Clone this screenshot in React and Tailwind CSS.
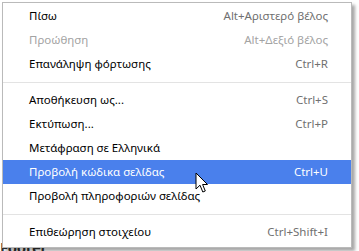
import React from 'react'

const items = [
  { label: "Πίσω", shortcut: "Alt+Αριστερό βέλος" },
  { label: "Προώθηση", shortcut: "Alt+Δεξιό βέλος", disabled: true },
  { label: "Επανάληψη φόρτωσης", shortcut: "Ctrl+R" },
  { sep: true },
  { label: "Αποθήκευση ως...", shortcut: "Ctrl+S" },
  { label: "Εκτύπωση...", shortcut: "Ctrl+P" },
  { label: "Μετάφραση σε Ελληνικά" },
  { label: "Προβολή κώδικα σελίδας", shortcut: "Ctrl+U", active: true },
  { label: "Προβολή πληροφοριών σελίδας" },
  { sep: true },
  { label: "Επιθεώρηση στοιχείου", shortcut: "Ctrl+Shift+I" },
]

export default function App() {
  return (
    <div className="relative w-[359px] h-[251px] bg-white overflow-hidden font-['Noto_Sans',sans-serif] text-[11.5px]">
      {/* page behind the menu */}
      <div className="absolute left-0 bottom-[-7px] text-[15px] font-bold text-[#333] tracking-tight">Footer</div>

      <div className="relative ml-[2px] mt-[2px] w-[350px] bg-white border border-[#bababa] pt-[1px] pb-[3px] shadow-[3px_3px_3px_rgba(0,0,0,0.35)]">
        {items.map((it, i) =>
          it.sep ? (
            <div key={i} className="h-[12px] flex items-center">
              <div className="w-full h-px bg-[#e3e3e3]" />
            </div>
          ) : (
            <div
              key={i}
              className={
                "h-[24px] flex items-center justify-between pl-[26px] pr-[23px] " +
                (it.active ? "bg-[#4a80ec] text-white" : it.disabled ? "text-[#a3a3a3]" : "text-black")
              }
            >
              <span>{it.label}</span>
              {it.shortcut && (
                <span className={it.active ? "text-white" : it.disabled ? "text-[#a3a3a3]" : "text-[#707070]"}>
                  {it.shortcut}
                </span>
              )}
            </div>
          )
        )}
        {/* mouse cursor */}
        <svg className="absolute left-[192px] top-[169px]" width="14" height="22" viewBox="0 0 14 22">
          <path d="M1 1 L1 17 L5 13.2 L7.8 20 L10.3 19 L7.6 12.5 L12.5 12.5 Z" fill="#fff" stroke="#000" strokeWidth="1" strokeLinejoin="miter" />
        </svg>
      </div>
    </div>
  )
}
